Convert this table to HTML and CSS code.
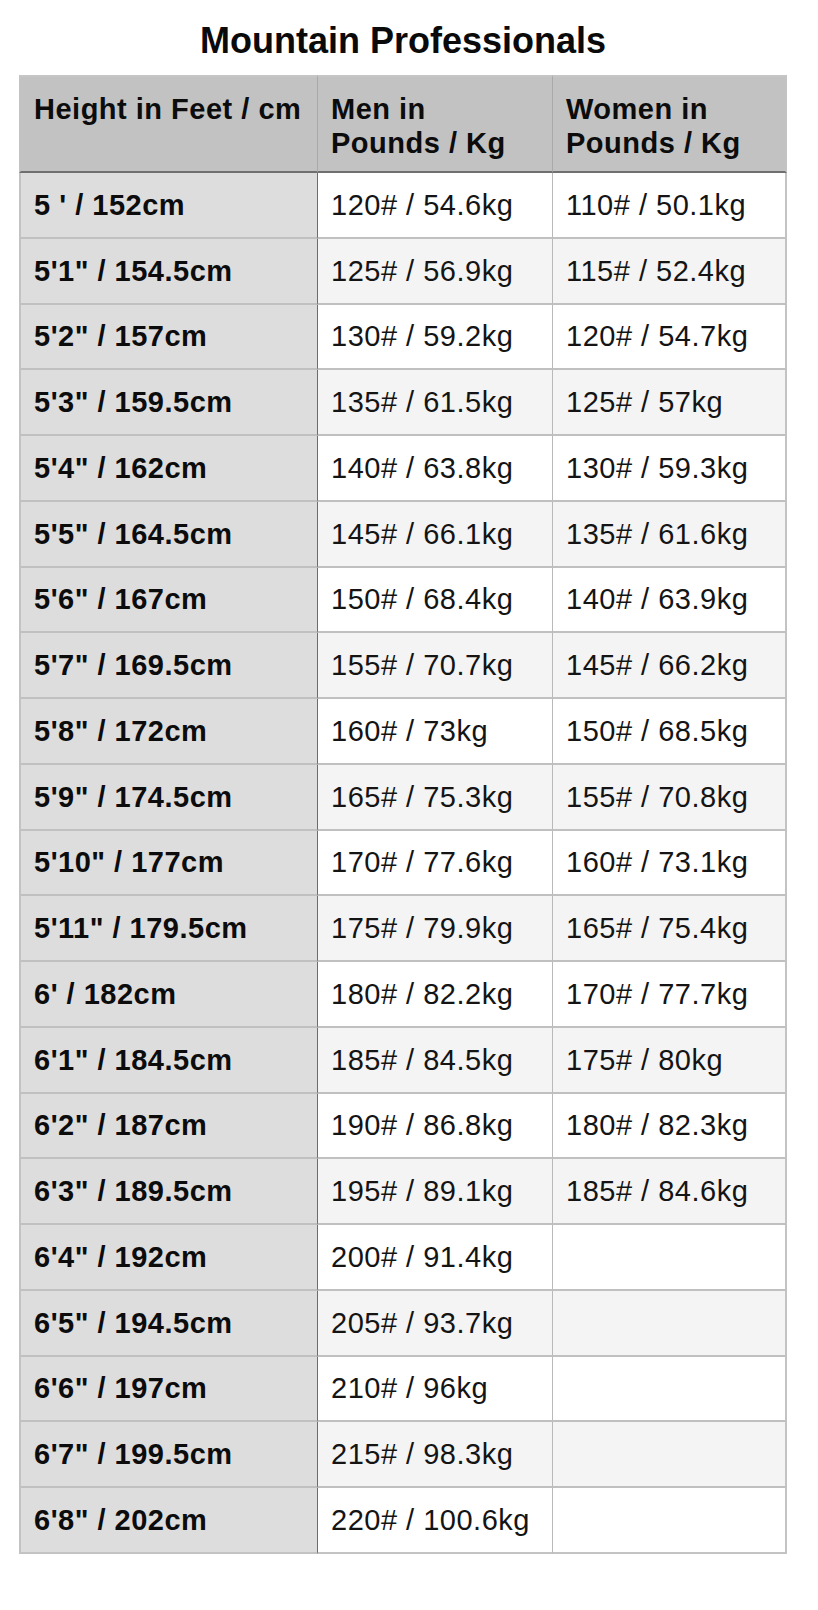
FILE: index.html
```html
<!DOCTYPE html>
<html>
<head>
<meta charset="utf-8">
<link rel="stylesheet" href="styles.css">
</head>
<body>
<div class="wrap">
  <h1 class="title">Mountain Professionals</h1>
  <table class="chart">
    <colgroup><col class="c1"><col class="c2"><col class="c3"></colgroup>
    <thead>
      <tr><th>Height in Feet / cm</th><th>Men in<br>Pounds / Kg</th><th>Women in<br>Pounds / Kg</th></tr>
    </thead>
    <tbody>
      <tr><td>5 ' / 152cm</td><td>120# / 54.6kg</td><td>110# / 50.1kg</td></tr>
      <tr><td>5'1" / 154.5cm</td><td>125# / 56.9kg</td><td>115# / 52.4kg</td></tr>
      <tr><td>5'2" / 157cm</td><td>130# / 59.2kg</td><td>120# / 54.7kg</td></tr>
      <tr><td>5'3" / 159.5cm</td><td>135# / 61.5kg</td><td>125# / 57kg</td></tr>
      <tr><td>5'4" / 162cm</td><td>140# / 63.8kg</td><td>130# / 59.3kg</td></tr>
      <tr><td>5'5" / 164.5cm</td><td>145# / 66.1kg</td><td>135# / 61.6kg</td></tr>
      <tr><td>5'6" / 167cm</td><td>150# / 68.4kg</td><td>140# / 63.9kg</td></tr>
      <tr><td>5'7" / 169.5cm</td><td>155# / 70.7kg</td><td>145# / 66.2kg</td></tr>
      <tr><td>5'8" / 172cm</td><td>160# / 73kg</td><td>150# / 68.5kg</td></tr>
      <tr><td>5'9" / 174.5cm</td><td>165# / 75.3kg</td><td>155# / 70.8kg</td></tr>
      <tr><td>5'10" / 177cm</td><td>170# / 77.6kg</td><td>160# / 73.1kg</td></tr>
      <tr><td>5'11" / 179.5cm</td><td>175# / 79.9kg</td><td>165# / 75.4kg</td></tr>
      <tr><td>6' / 182cm</td><td>180# / 82.2kg</td><td>170# / 77.7kg</td></tr>
      <tr><td>6'1" / 184.5cm</td><td>185# / 84.5kg</td><td>175# / 80kg</td></tr>
      <tr><td>6'2" / 187cm</td><td>190# / 86.8kg</td><td>180# / 82.3kg</td></tr>
      <tr><td>6'3" / 189.5cm</td><td>195# / 89.1kg</td><td>185# / 84.6kg</td></tr>
      <tr><td>6'4" / 192cm</td><td>200# / 91.4kg</td><td></td></tr>
      <tr><td>6'5" / 194.5cm</td><td>205# / 93.7kg</td><td></td></tr>
      <tr><td>6'6" / 197cm</td><td>210# / 96kg</td><td></td></tr>
      <tr><td>6'7" / 199.5cm</td><td>215# / 98.3kg</td><td></td></tr>
      <tr><td>6'8" / 202cm</td><td>220# / 100.6kg</td><td></td></tr>
    </tbody>
  </table>
</div>
</body>
</html>
```

FILE: styles.css
```css
html, body {
  margin: 0;
  padding: 0;
  background: #ffffff;
}

body {
  font-family: "Liberation Sans", Arial, Helvetica, sans-serif;
  color: #111111;
}

.wrap {
  width: 768px;
  padding: 20px 0 0 19px;
}

.title {
  margin: 0 0 13px 0;
  font-size: 36px;
  line-height: 42px;
  font-weight: bold;
  text-align: center;
  color: #0a0a0a;
}

.chart {
  width: 768px;
  table-layout: fixed;
  border-collapse: separate;
  border-spacing: 0;
}

.c1 { width: 299px; }
.c2 { width: 235px; }
.c3 { width: 234px; }

.chart thead tr {
  height: 98px;
}

.chart th {
  box-sizing: border-box;
  background: #c1c2c1;
  text-align: left;
  vertical-align: top;
  font-size: 29px;
  line-height: 34px;
  font-weight: bold;
  letter-spacing: 0.5px;
  padding: 15px 13px 0 13px;
  border-top: 2px solid #c6c6c6;
  border-right: 1px solid #a9a9a9;
  border-bottom: 2px solid #6f6f6f;
  color: #0c0c0c;
}

.chart th:first-child {
  border-left: 2px solid #c3c3c3;
}

.chart th:last-child {
  border-right: 2px solid #c3c3c3;
}

.chart tbody tr {
  height: 65.76px;
}

.chart td {
  box-sizing: border-box;
  padding: 0 13px;
  font-size: 29px;
  line-height: 34px;
  letter-spacing: 0.5px;
  vertical-align: middle;
  border-right: 1px solid #b9b9b9;
  border-bottom: 2px solid #c0c0c0;
  white-space: nowrap;
  background: #ffffff;
  color: #141414;
}

.chart tbody tr:nth-child(even) td {
  background: #f4f4f4;
}

.chart tbody td:first-child {
  background: #dddddd;
  font-weight: bold;
  border-left: 2px solid #c3c3c3;
  border-right: 1px solid #6c6c6c;
  color: #0c0c0c;
}

.chart tbody tr:nth-child(even) td:first-child {
  background: #dddddd;
}

.chart tbody td:last-child {
  border-right: 2px solid #c3c3c3;
}

.chart tbody tr:last-child td {
  border-bottom: 2px solid #c3c3c3;
}
```
